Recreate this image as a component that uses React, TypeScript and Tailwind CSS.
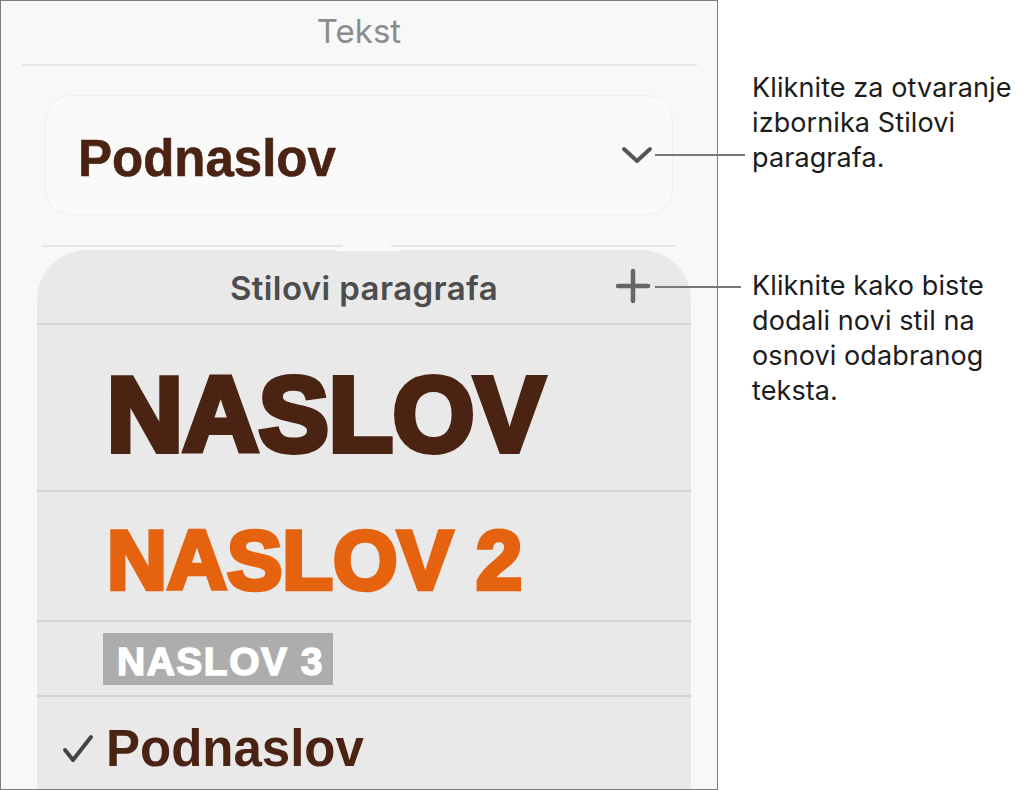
import React from 'react';

const sans = { fontFamily: 'Inter, "Liberation Sans", sans-serif' };
const helv = { fontFamily: '"Liberation Sans", Arial, sans-serif' };

const ChevronDown = () => (
  <svg width="32" height="20" viewBox="0 0 32 20" fill="none">
    <path d="M3 4 L16 16 L29 4" stroke="#555555" strokeWidth="4" strokeLinecap="round" strokeLinejoin="round" />
  </svg>
);

const PlusIcon = () => (
  <svg width="36" height="36" viewBox="0 0 36 36" fill="none">
    <path d="M18 3 V33 M3 18 H33" stroke="#666666" strokeWidth="4.5" strokeLinecap="round" />
  </svg>
);

const CheckIcon = () => (
  <svg width="32" height="30" viewBox="0 0 32 30" fill="none">
    <path d="M3 16 L11 26 L29 3" stroke="#454545" strokeWidth="4" strokeLinecap="round" strokeLinejoin="round" />
  </svg>
);

const Divider = () => <div className="h-[2px] bg-[#d5d5d5]" />;

const App: React.FC = () => {
  return (
    <div className="relative flex w-[1024px] h-[790px] bg-white overflow-hidden">
      {/* Inspector panel */}
      <div className="relative w-[718px] h-[790px] shrink-0 border border-[#7d7d7d] bg-[#f8f8f8] overflow-hidden flex flex-col">
        <div className="h-[63px] pt-[10px] text-center text-[33px] leading-[40px] text-[#8c8c8c]" style={sans}>
          Tekst
        </div>
        <div className="ml-[21px] mr-[20px] h-[2px] bg-[#e6e6e6]" />

        {/* Paragraph style picker */}
        <div className="mt-[29px] ml-[44px] mr-[44px] h-[120px] rounded-[26px] border border-[#efefef] bg-[#fafafa] flex items-center justify-between pl-[32px] pr-[19px]">
          <span className="pt-[6px] text-[51px] leading-none font-bold text-[#4a2313] [-webkit-text-stroke:0.6px_#4a2313]" style={helv}>
            Podnaslov
          </span>
          <ChevronDown />
        </div>

        <div className="mt-[30px] ml-[41px] mr-[42px] h-[2px] bg-[#e6e6e6]" />

        {/* Popover */}
        <div className="relative mt-[3px] ml-[36px] mr-[26px] flex-1 rounded-t-[50px] bg-[#e9e9e9] flex flex-col">
          <svg className="absolute left-[295px] top-[-28px]" width="72" height="29" viewBox="0 0 72 29">
            <path d="M0 29 C16 29 22 1 35 1 C48 1 54 29 72 29 Z" fill="#fafaf9" />
          </svg>

          <div className="relative h-[73px] pt-[4px] flex items-center justify-center">
            <span className="text-[33px] leading-none font-semibold text-[#4d4d4d] tracking-[0.4px]" style={sans}>
              Stilovi paragrafa
            </span>
            <div className="absolute right-[40px] top-[18px]">
              <PlusIcon />
            </div>
          </div>
          <Divider />

          <div className="h-[165px] pt-[37px] pl-[70px]">
            <span className="text-[105px] leading-none font-bold text-[#4a2313] [-webkit-text-stroke:6px_#4a2313]" style={helv}>
              NASLOV
            </span>
          </div>
          <Divider />

          <div className="h-[128px] pt-[27px] pl-[70px]">
            <span className="text-[83px] leading-none font-bold text-[#e5630f] [-webkit-text-stroke:4.5px_#e5630f]" style={helv}>
              NASLOV 2
            </span>
          </div>
          <Divider />

          <div className="h-[73px] pt-[11px] pl-[66px]">
            <div className="w-[230px] h-[52px] bg-[#adadad] flex items-center pl-[14px] pt-[5px]">
              <span className="text-[39px] leading-none font-bold text-white tracking-[1.5px] [-webkit-text-stroke:1.5px_#ffffff]" style={helv}>
                NASLOV 3
              </span>
            </div>
          </div>
          <Divider />

          <div className="flex items-center pl-[25px] pt-[26px] gap-[12px]">
            <CheckIcon />
            <span className="text-[51px] leading-none font-bold text-[#4a2313]" style={helv}>
              Podnaslov
            </span>
          </div>
        </div>
      </div>

      {/* Callouts */}
      <div className="pl-[34px] text-[27px] leading-[35px] text-[#1c1c1c] whitespace-nowrap tracking-[0.1px]" style={sans}>
        <p className="mt-[70px]">
          Kliknite za otvaranje
          <br />
          izbornika Stilovi
          <br />
          paragrafa.
        </p>
        <p className="mt-[93px]">
          Kliknite kako biste
          <br />
          dodali novi stil na
          <br />
          osnovi odabranog
          <br />
          teksta.
        </p>
      </div>

      <div className="absolute left-[655px] top-[154px] w-[90px] h-[2px] bg-[#777777]" />
      <div className="absolute left-[655px] top-[286px] w-[86px] h-[2px] bg-[#777777]" />
    </div>
  );
};

export default App;
